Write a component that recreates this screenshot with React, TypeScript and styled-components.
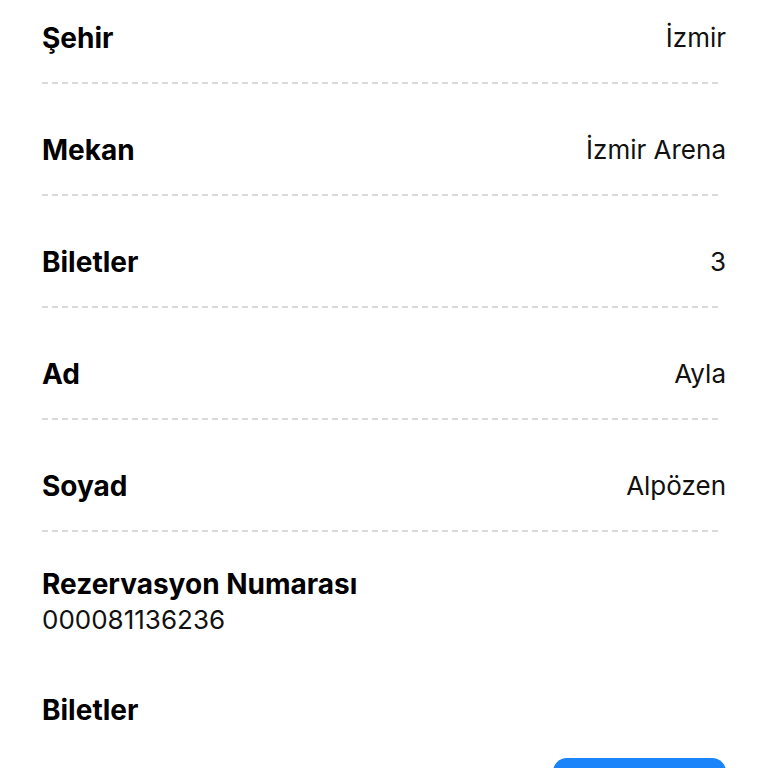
import React, { FC } from 'react';
import styled, { createGlobalStyle } from 'styled-components';

const details = [
    { label: 'Şehir', value: 'İzmir' },
    { label: 'Mekan', value: 'İzmir Arena' },
    { label: 'Biletler', value: '3' },
    { label: 'Ad', value: 'Ayla' },
    { label: 'Soyad', value: 'Alpözen' },
];

const App: FC = () => {
    return (
        <>
            <GlobalStyle />
            <Page>
                {details.map((item, index) => (
                    <DetailRow key={item.label} $last={index === details.length - 1}>
                        <Line>
                            <Label>{item.label}</Label>
                            <Value>{item.value}</Value>
                        </Line>
                        <Divider />
                    </DetailRow>
                ))}

                <Reservation>
                    <Label>Rezervasyon Numarası</Label>
                    <Value>000081136236</Value>
                </Reservation>

                <Section>
                    <Label>Biletler</Label>
                    <Actions>
                        <PrimaryButton type="button" aria-label="Biletler" />
                    </Actions>
                </Section>
            </Page>
        </>
    );
};

export default App;

const GlobalStyle = createGlobalStyle`
    html, body {
        margin: 0;
        padding: 0;
        background: #ffffff;
        overflow: hidden;
    }

    body {
        font-family: Inter, "Noto Sans", "Liberation Sans", sans-serif;
        color: #000;
        -webkit-font-smoothing: antialiased;
    }
`;

const Page = styled.div`
    display: flex;
    flex-direction: column;
    padding: 22px 42px 0 42px;
    height: 768px;
    box-sizing: border-box;
`;

const DetailRow = styled.div<{ $last?: boolean }>`
    display: flex;
    flex-direction: column;
    margin-bottom: ${(p) => (p.$last ? '36px' : '50px')};
`;

const Line = styled.div`
    display: flex;
    align-items: center;
    justify-content: space-between;
    height: 32px;
    margin-bottom: 28px;
`;

const Label = styled.span`
    font-size: 28px;
    font-weight: 700;
    line-height: 32px;
`;

const Value = styled.span`
    font-size: 26px;
    font-weight: 400;
    line-height: 32px;
    color: #111;
`;

const Divider = styled.div`
    height: 2px;
    margin-right: 6px;
    background: repeating-linear-gradient(
        to right,
        #d9d9d9 0,
        #d9d9d9 6px,
        transparent 6px,
        transparent 10px
    );
`;

const Reservation = styled.div`
    display: flex;
    flex-direction: column;
    gap: 4px;
    margin-bottom: 58px;
`;

const Section = styled.div`
    display: flex;
    flex-direction: column;
`;

const Actions = styled.div`
    display: flex;
    justify-content: flex-end;
    margin-top: 32px;
`;

const PrimaryButton = styled.button`
    width: 173px;
    height: 52px;
    border: none;
    border-radius: 14px;
    background: #1a84fb;
    cursor: pointer;
`;
